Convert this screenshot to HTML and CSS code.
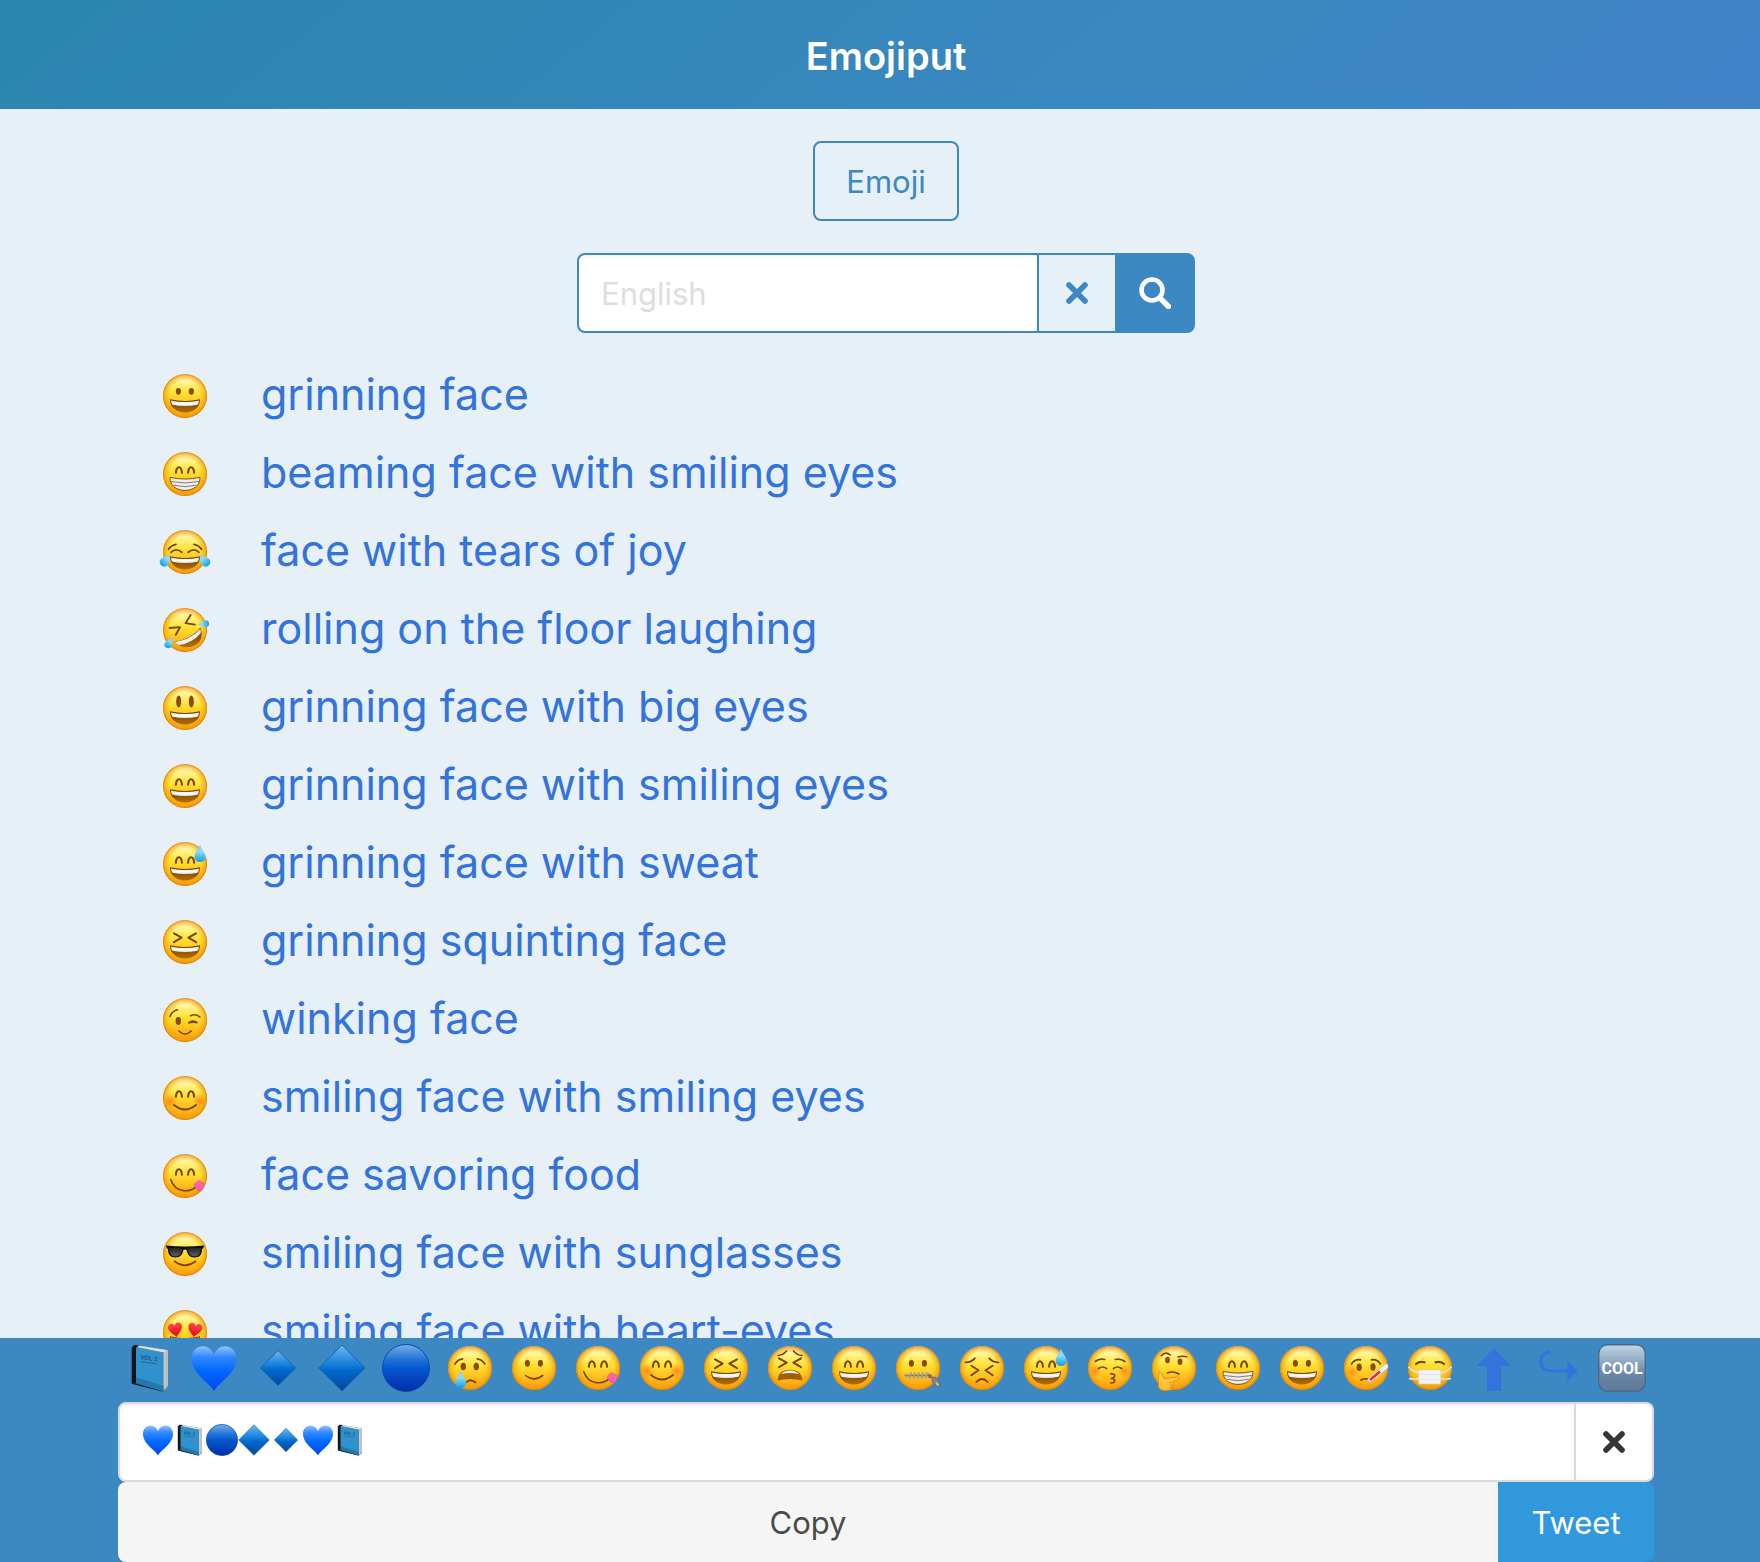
FILE: index.html
```html
<!DOCTYPE html>
<html lang="en">
<head>
  <meta charset="UTF-8">
  <meta name="viewport" content="width=device-width, initial-scale=1">
  <title>Emojiput</title>
  <link rel="stylesheet" href="styles.css">
</head>
<body>
  <!-- emoji sprite -->
  <svg class="sprite" width="0" height="0" aria-hidden="true">
    <defs>
      <linearGradient id="g-face" x1="0" y1="0" x2="0" y2="1">
        <stop offset="0" stop-color="#fffbe6"/>
        <stop offset=".2" stop-color="#fff48a"/>
        <stop offset=".45" stop-color="#ffe02f"/>
        <stop offset=".75" stop-color="#ffb91c"/>
        <stop offset="1" stop-color="#f59a10"/>
      </linearGradient>
      <radialGradient id="g-rim">
        <stop offset=".7" stop-color="#fba505" stop-opacity="0"/>
        <stop offset=".92" stop-color="#f99c05" stop-opacity=".65"/>
        <stop offset="1" stop-color="#d07808" stop-opacity=".95"/>
      </radialGradient>
      <radialGradient id="g-blush">
        <stop offset="0" stop-color="#ff6a1a" stop-opacity=".7"/>
        <stop offset="1" stop-color="#ff7a1a" stop-opacity="0"/>
      </radialGradient>
      <linearGradient id="g-drop" x1="0" y1="0" x2="0" y2="1">
        <stop offset="0" stop-color="#7fd0f0"/>
        <stop offset=".4" stop-color="#8adcfa"/>
        <stop offset="1" stop-color="#0c9be6"/>
      </linearGradient>
      <linearGradient id="g-teeth" x1="0" y1="0" x2="0" y2="1">
        <stop offset="0" stop-color="#c9ccd2"/>
        <stop offset=".5" stop-color="#ffffff"/>
        <stop offset="1" stop-color="#dfe1e6"/>
      </linearGradient>
      <linearGradient id="g-mouth" x1="0" y1="0" x2="0" y2="1">
        <stop offset="0" stop-color="#6e3a00"/>
        <stop offset="1" stop-color="#b06f05"/>
      </linearGradient>
      <linearGradient id="g-heart" x1="0" y1="0" x2="0" y2="1">
        <stop offset="0" stop-color="#8fc3ff"/>
        <stop offset=".25" stop-color="#2f86ff"/>
        <stop offset=".55" stop-color="#0069ff"/>
        <stop offset="1" stop-color="#0047f5"/>
      </linearGradient>
      <linearGradient id="g-diamond" x1="0" y1="0" x2="0" y2="1">
        <stop offset="0" stop-color="#6fb6ec"/>
        <stop offset=".4" stop-color="#1a83dc"/>
        <stop offset=".55" stop-color="#0069cc"/>
        <stop offset="1" stop-color="#0a469e"/>
      </linearGradient>
      <linearGradient id="g-circle" x1="0" y1="0" x2="0" y2="1">
        <stop offset="0" stop-color="#7aaeea"/>
        <stop offset=".3" stop-color="#2676d8"/>
        <stop offset=".5" stop-color="#0459cf"/>
        <stop offset="1" stop-color="#022ca8"/>
      </linearGradient>
      <linearGradient id="g-lens" x1="0" y1="0" x2="0" y2="1">
        <stop offset="0" stop-color="#222"/>
        <stop offset="1" stop-color="#5c5c5c"/>
      </linearGradient>
      <linearGradient id="g-cool" x1="0" y1="0" x2="0" y2="1">
        <stop offset="0" stop-color="#c3d6e4"/>
        <stop offset=".35" stop-color="#8fabc3"/>
        <stop offset=".6" stop-color="#6a89a8"/>
        <stop offset="1" stop-color="#5f7896"/>
      </linearGradient>
      <linearGradient id="g-red" x1="0" y1="0" x2="0" y2="1">
        <stop offset="0" stop-color="#ff4b4b"/>
        <stop offset="1" stop-color="#e00010"/>
      </linearGradient>
      <linearGradient id="g-hand" x1="0" y1="0" x2="0" y2="1">
        <stop offset="0" stop-color="#ffd84a"/>
        <stop offset="1" stop-color="#ffb52a"/>
      </linearGradient>

      <!-- shared parts -->
      <g id="p-face">
        <circle cx="24" cy="24" r="22" fill="url(#g-face)"/>
        <circle cx="24" cy="24" r="22" fill="url(#g-rim)"/>
      </g>
      <g id="p-dots" fill="#8a4b00">
        <ellipse cx="17.4" cy="19.3" rx="2.6" ry="3.4"/>
        <ellipse cx="30.4" cy="19.3" rx="2.6" ry="3.4"/>
      </g>
      <g id="p-arches" fill="none" stroke="#7c4300" stroke-width="2.1" stroke-linecap="round">
        <path d="M14.9 22.8Q15.3 17.2 17.9 17.2T20.9 22.8"/>
        <path d="M27.1 22.8Q27.5 17.2 30.1 17.2T33.1 22.8"/>
      </g>
      <g id="p-squint" fill="none" stroke="#7c4300" stroke-width="2" stroke-linecap="round" stroke-linejoin="round">
        <path d="M13 15.3L20.6 19.7L13 24.2M35 15.3L27.4 19.7L35 24.2"/>
      </g>
      <g id="p-grin">
        <path d="M9 27.3Q24 30.8 39 27.3C39.3 36 32 40.4 24 40.4S8.7 36 9 27.3z" fill="url(#g-mouth)"/>
        <path d="M9.9 28.4Q24 31.4 38.1 28.4Q37.9 31 36.5 32.7Q24 35.4 11.5 32.7Q10.1 31 9.9 28.4z" fill="url(#g-teeth)"/>
      </g>
      <path id="p-drop" d="M0 -9C1 -5 5.5 -.5 5.5 3A5.500 5.500 0 0 1 -5.500 3C-5.500 -.5 -1 -5 0 -9z" fill="url(#g-drop)"/>
      <path id="p-heart" d="M24 47C20 39 1.500 30 1.500 14.500C1.500 7 7 2.200 13 2.200C18 2.200 22 5.500 24 10.500C26 5.500 30 2.200 35 2.200C41 2.200 46.500 7 46.500 14.500C46.500 30 28 39 24 47z"/>
    </defs>

    <symbol id="grinning" viewBox="0 0 48 48"><use href="#p-face"/><use href="#p-dots"/><use href="#p-grin"/></symbol>
    <symbol id="beaming" viewBox="0 0 48 48">
      <use href="#p-face"/><use href="#p-arches"/>
      <path d="M9 27.3Q24 30.8 39 27.3C39.3 36 32 40.4 24 40.4S8.7 36 9 27.3z" fill="#eceef2" stroke="#8a5000" stroke-width="1"/>
      <path d="M10 31.5Q24 34.5 38 31.5M12.500 35.200Q24 38.200 35.500 35.200" fill="none" stroke="#8d7a66" stroke-width="1"/>
    </symbol>
    <symbol id="joy" viewBox="0 0 48 48" overflow="visible">
      <use href="#p-face"/><use href="#p-grin" y="1"/>
      <path d="M10 24.300Q15 19.500 20.800 24.300M27.200 24.300Q33 19.500 38 24.300M7.500 21.300Q10 17.300 15 16.300M40.500 21.300Q38 17.300 33 16.300" fill="none" stroke="#7c4300" stroke-width="1.800" stroke-linecap="round"/>
      <use href="#p-drop" transform="translate(5 32) rotate(40) scale(.85)"/>
      <use href="#p-drop" transform="translate(43 32) rotate(-40) scale(.85)"/>
    </symbol>
    <symbol id="rofl" viewBox="0 0 48 48" overflow="visible">
      <use href="#p-face"/>
      <path d="M8.500 22L19 21.200L14.700 29M29.700 9L24.500 17.200L34 18.700" fill="none" stroke="#7c4300" stroke-width="1.800" stroke-linecap="round" stroke-linejoin="round"/>
      <path d="M12.500 36Q30 33.500 39.500 21.500Q43.500 33 35 38.800Q24 45 12.500 36z" fill="url(#g-mouth)"/>
      <path d="M13.500 36.300Q30 33.500 39.200 23Q40.400 25.500 39.600 27.300Q31 37.500 17.500 39Q15 38 13.500 36.300z" fill="#f2f3f6"/>
      <use href="#p-drop" transform="translate(8.500 36.500) rotate(30) scale(.7)"/>
      <use href="#p-drop" transform="translate(42.500 18) rotate(-95) scale(.65)"/>
    </symbol>
    <symbol id="big-eyes" viewBox="0 0 48 48">
      <use href="#p-face"/><use href="#p-grin"/>
      <ellipse cx="17.700" cy="17.500" rx="2.500" ry="6" fill="#8a4b00"/>
      <ellipse cx="30.300" cy="17.500" rx="2.500" ry="6" fill="#8a4b00"/>
    </symbol>
    <symbol id="smile" viewBox="0 0 48 48"><use href="#p-face"/><use href="#p-arches"/><use href="#p-grin"/></symbol>
    <symbol id="sweat" viewBox="0 0 48 48">
      <use href="#p-face"/><use href="#p-arches"/><use href="#p-grin"/>
      <use href="#p-drop" transform="translate(39 13.500)"/>
    </symbol>
    <symbol id="squinting" viewBox="0 0 48 48"><use href="#p-face"/><use href="#p-squint"/><use href="#p-grin"/></symbol>
    <symbol id="wink" viewBox="0 0 48 48">
      <use href="#p-face"/>
      <ellipse cx="17.300" cy="25" rx="2.700" ry="4" fill="#8a4b00"/>
      <path d="M9 20.500Q11 15 16.500 13.800M29.500 19.700Q34.500 17.200 39 21M27.700 26.800Q32 23.300 36.500 26.800Q32 25.800 27.700 26.800M17.800 35Q24 41 30.200 35" fill="none" stroke="#7c4300" stroke-width="1.600" stroke-linecap="round"/>
    </symbol>
    <symbol id="blush" viewBox="0 0 48 48">
      <use href="#p-face"/>
      <circle cx="9.500" cy="27" r="7.500" fill="url(#g-blush)"/>
      <circle cx="38.500" cy="27" r="7.500" fill="url(#g-blush)"/>
      <use href="#p-arches"/>
      <path d="M13 31Q24 40 35 31" fill="none" stroke="#7c4300" stroke-width="1.800" stroke-linecap="round"/>
    </symbol>
    <symbol id="savoring" viewBox="0 0 48 48">
      <use href="#p-face"/><use href="#p-arches"/>
      <path d="M9.700 27.500C14 41 30 42 37 32.500" fill="none" stroke="#7c4300" stroke-width="1.600" stroke-linecap="round"/>
      <path d="M33 32.500L37.500 28.500Q40 30.500 42.500 31Q44 36.500 40 38.500Q35.500 39.500 33 32.500z" fill="#ff62b0" stroke="#e0408f" stroke-width=".6"/>
    </symbol>
    <symbol id="sunglasses" viewBox="0 0 48 48">
      <use href="#p-face"/>
      <path d="M5 15.500Q24 17.500 43 15.500L42.500 18L41 19C41 24 39 27.500 33.500 27.500C28.500 27.500 26.500 24.500 25.500 20Q24 18.800 22.500 20C21.500 24.500 19.500 27.500 14.500 27.500C9 27.500 7 24 7 19L5.500 18z" fill="#0c0c0c"/>
      <path d="M8.300 18Q15 17.300 21.300 18.600C20.500 23.500 19 26.400 14.500 26.400C9.500 26.400 8.300 22.500 8.300 18zM39.700 18Q33 17.300 26.700 18.600C27.500 23.500 29 26.400 33.500 26.400C38.500 26.400 39.700 22.500 39.700 18z" fill="url(#g-lens)"/>
      <path d="M13.500 31.300Q24 39.300 34.500 31.300" fill="none" stroke="#7c4300" stroke-width="1.700" stroke-linecap="round"/>
    </symbol>
    <symbol id="heart-eyes" viewBox="0 0 48 48">
      <use href="#p-face"/><use href="#p-grin" y="1"/>
      <g fill="url(#g-red)">
        <use href="#p-heart" transform="translate(7 14.500) rotate(-10 7 7) scale(.31)"/>
        <use href="#p-heart" transform="translate(26.500 14.500) rotate(10 7 7) scale(.31)"/>
      </g>
    </symbol>
    <symbol id="book" viewBox="0 0 48 48">
      <path d="M12 1.500L42 6.300V43.500L37.300 47.300L10 40z" fill="#8d8f93"/>
      <path d="M14 1.800L42 6.300L37.500 8.600L10 2.900z" fill="#dfe0e2"/>
      <path d="M37.500 8.600L41.700 6.500V41.800L37.500 46z" fill="#d5d3cf"/>
      <path d="M39 8V44M40.400 7.300V43" stroke="#aaa7a2" stroke-width=".6"/>
      <path d="M9.500 2.900L37.500 8.600V47.400L9.500 40.300z" fill="#3191cd"/>
      <path d="M9.500 33L37.500 42V47.400L9.500 40.300z" fill="#2279b2"/>
      <path d="M5.700 3.200L10 1V39.500L5.700 38.700z" fill="#10151d"/>
      <path d="M5.700 38.700L10 39.500L37.500 47.400H36L5.700 39.700zM7 1.600L13 1.300L11 3.300L8 4z" fill="#10151d"/>
      <text class="book-title" x="14" y="15" transform="rotate(8 14 15)">VOL 3</text>
      <path d="M15 17.500L31 20" stroke="#24608c" stroke-width=".8"/>
    </symbol>
    <symbol id="blue-heart" viewBox="0 0 48 48"><use href="#p-heart" fill="url(#g-heart)"/></symbol>
    <symbol id="small-diamond" viewBox="0 0 48 48"><path d="M24 6.500L41.500 24L24 41.500L6.500 24z" fill="url(#g-diamond)" stroke="#0c5aa8" stroke-width=".8"/></symbol>
    <symbol id="large-diamond" viewBox="0 0 48 48"><path d="M24 1L47 24L24 47L1 24z" fill="url(#g-diamond)" stroke="#0c5aa8" stroke-width=".8"/></symbol>
    <symbol id="blue-circle" viewBox="0 0 48 48"><circle cx="24" cy="24" r="23.500" fill="url(#g-circle)" stroke="#0a4bb0" stroke-width="1"/></symbol>
    <symbol id="cry" viewBox="0 0 48 48">
      <use href="#p-face"/>
      <ellipse cx="17.300" cy="22.500" rx="2.700" ry="3.800" fill="#8a4b00"/>
      <ellipse cx="30.300" cy="22.500" rx="2.700" ry="3.800" fill="#8a4b00"/>
      <path d="M9 20Q11.500 15.500 16.500 14.800M38.800 20Q36.300 15.500 31.300 14.800M20 38.500Q24.500 34 29.500 38.500" fill="none" stroke="#7c4300" stroke-width="1.700" stroke-linecap="round"/>
      <use href="#p-drop" transform="translate(14.700 35.500)"/>
    </symbol>
    <symbol id="slight-smile" viewBox="0 0 48 48">
      <use href="#p-face"/><use href="#p-dots"/>
      <path d="M15.500 31.500Q24 38.300 32.700 31.500" fill="none" stroke="#7c4300" stroke-width="1.600" stroke-linecap="round"/>
    </symbol>
    <symbol id="tired" viewBox="0 0 48 48">
      <use href="#p-face"/><use href="#p-squint" y="-1"/>
      <path d="M12 11.500Q17 11 20.500 6.900M36 11.500Q31 11 27.500 6.900" fill="none" stroke="#7c4300" stroke-width="1.500" stroke-linecap="round"/>
      <path d="M11.500 36.500C12 29 17 25.700 24 25.700S36 29 36.500 36.500Q24 33.500 11.500 36.500z" fill="#a06000"/>
      <path d="M15 30Q18.500 26.500 24 26.500T33 30Q24 27.800 15 30z" fill="#f4f5f8"/>
    </symbol>
    <symbol id="zipper" viewBox="0 0 48 48">
      <use href="#p-face"/><use href="#p-dots"/>
      <path d="M10.500 31.500H35" stroke="#8a6a3a" stroke-width="1.400"/>
      <path d="M13 29.800L12.500 33.500M17 28.500L15.500 34.500M21 28.500L19.500 34.500M25 28.500L23.500 34.500M29 28.500L27.500 34.500M33 28.500L31.500 34.500" stroke="#9a9ca3" stroke-width="2"/>
      <path d="M34 29.500L38 31L37.500 34.500L34.500 34z" fill="#6d6f75"/>
      <path d="M38 33L42 33.500L47 40L43.500 43.500L38.500 38z" fill="#84868c" stroke="#5d5f66" stroke-width=".8"/>
      <path d="M42.500 39.300L44 41" stroke="#d0d2d6" stroke-width="1.600" stroke-linecap="round"/>
    </symbol>
    <symbol id="persevere" viewBox="0 0 48 48">
      <use href="#p-face"/>
      <path d="M13.300 21.700L20.500 26.300L13.300 31.200M34.700 21.700L27.500 26.300L34.700 31.200" fill="none" stroke="#7c4300" stroke-width="1.900" stroke-linecap="round" stroke-linejoin="round"/>
      <path d="M7.500 18.300Q13 18.500 16.700 14.300M40.500 18.300Q35 18.500 31.300 14.300M18.300 38Q24 32 29.700 38" fill="none" stroke="#7c4300" stroke-width="1.800" stroke-linecap="round"/>
    </symbol>
    <symbol id="kissing" viewBox="0 0 48 48">
      <use href="#p-face"/>
      <circle cx="9.500" cy="27" r="7" fill="url(#g-blush)"/>
      <circle cx="38.500" cy="27" r="7" fill="url(#g-blush)"/>
      <path d="M9.300 17.500Q13 14.200 18.700 15.500M38.700 17.500Q35 14.200 29.300 15.500M12.500 24.500Q16.500 21.500 20.500 24.500M27.500 24.500Q31.500 21.500 35.500 24.500" fill="none" stroke="#7c4300" stroke-width="1.700" stroke-linecap="round"/>
      <path d="M24.500 29.700Q29 29.700 28.700 32Q28 34 25.500 34.500Q29 34.800 28.800 37Q28 39.300 24.700 39" fill="none" stroke="#7c4300" stroke-width="1.600" stroke-linecap="round" stroke-linejoin="round"/>
    </symbol>
    <symbol id="thinking" viewBox="0 0 48 48">
      <use href="#p-face"/>
      <ellipse cx="17.500" cy="16" rx="2.400" ry="3.300" fill="#8a4b00"/>
      <ellipse cx="30" cy="17.700" rx="2.400" ry="3.300" fill="#8a4b00"/>
      <path d="M11.300 11.700Q15.500 7 20.300 11M28 13Q32 11.500 36.700 12.800M17.500 29Q23 26.700 29 30" fill="none" stroke="#7c4300" stroke-width="1.600" stroke-linecap="round"/>
      <path d="M9 28Q10.500 27 11.500 29L14.500 35L27.500 33Q30.500 34 28.500 35.500L23.500 37.500Q24.500 39 23.300 40Q24 42 22.500 43Q22.500 46 17 46.500Q10.500 47 8.800 43.500Q7.500 37 9 28z" fill="url(#g-hand)" stroke="#e58a10" stroke-width=".9"/>
      <path d="M19 38.300H23.500M19.500 41H23M19.500 43.500H22" stroke="#d98010" stroke-width=".8"/>
    </symbol>
    <symbol id="thermometer" viewBox="0 0 48 48">
      <use href="#p-face"/>
      <circle cx="10.500" cy="28" r="7" fill="url(#g-blush)"/>
      <ellipse cx="17.200" cy="23.300" rx="2.600" ry="3.700" fill="#8a4b00"/>
      <ellipse cx="31" cy="23" rx="2.600" ry="3.700" fill="#8a4b00"/>
      <path d="M9.500 20Q12.500 15 18.500 15.800M38.500 20Q35.500 15 29.500 15.800M19 36Q23 33.800 28.500 35.500" fill="none" stroke="#7c4300" stroke-width="1.700" stroke-linecap="round"/>
      <path d="M28 36L44 22.500" stroke="#c4c8d0" stroke-width="5" stroke-linecap="round"/>
      <path d="M28 36L44 22.500" stroke="#f3f4f7" stroke-width="3.600" stroke-linecap="round"/>
      <path d="M28 36L38 27.500" stroke="#f02a2a" stroke-width="2.600"/>
    </symbol>
    <symbol id="mask" viewBox="0 0 48 48">
      <use href="#p-face"/>
      <path d="M10 20Q13 16.700 18.500 18.300M38 20Q35 16.700 29.500 18.300" fill="none" stroke="#7c4300" stroke-width="2.200" stroke-linecap="round"/>
      <path d="M2.500 22.700Q8 28.500 13 28.500M3 34.500Q8 35.500 13 34.500M45.500 22.700Q40 28.500 35 28.500M45 34.500Q40 35.500 35 34.500" fill="none" stroke="#e6eaf0" stroke-width="1.600"/>
      <rect x="12.700" y="26" width="22" height="14" rx="1" fill="#f1f3f7" stroke="#cfd3da" stroke-width=".6"/>
      <path d="M13 30.500H34.500M13 35.500H34.500" stroke="#dde1e8" stroke-width=".8"/>
    </symbol>
    <symbol id="arrow-up" viewBox="0 0 48 48"><path d="M24 4.300L41.500 22H31V47H17V22H6.500z" fill="#3273dc"/></symbol>
    <symbol id="arrow-hook" viewBox="0 0 48 48">
      <path d="M16.700 8C10.500 8 6.700 12 6.700 17.300S10.500 26.700 16.700 26.700H34" fill="none" stroke="#3273dc" stroke-width="3"/>
      <path d="M33.500 16.700L43.500 26.700L33.500 36.700z" fill="#3273dc"/>
    </symbol>
    <symbol id="cool" viewBox="0 0 48 48">
      <rect x=".7" y=".7" width="46.600" height="46.600" rx="9" fill="url(#g-cool)" stroke="#4c698a" stroke-width="1.400"/>
      <text class="cool-text" x="24" y="30" text-anchor="middle">COOL</text>
    </symbol>
    <symbol id="times" viewBox="0 0 24 24"><path d="M4 4L20 20M20 4L4 20" fill="none" stroke="currentColor" stroke-width="5.600" stroke-linecap="round"/></symbol>
    <symbol id="search" viewBox="0 0 32 32">
      <circle cx="13" cy="13" r="10.500" fill="none" stroke="currentColor" stroke-width="4.600"/>
      <path d="M21 21L29.500 29.500" stroke="currentColor" stroke-width="5.400" stroke-linecap="round"/>
    </symbol>
  </svg>

  <header class="hero">
    <h1 class="title">Emojiput</h1>
  </header>

  <main class="main">
    <button class="button is-outlined" type="button">Emoji</button>

    <form class="search">
      <input class="search-input" type="text" placeholder="English" aria-label="Search emoji">
      <button class="search-clear" type="reset" aria-label="Clear search"><svg class="icon-times"><use href="#times"/></svg></button>
      <button class="search-submit" type="button" aria-label="Search"><svg class="icon-search"><use href="#search"/></svg></button>
    </form>

    <ul class="emoji-list">
      <li><a href="#"><svg class="emoji"><use href="#grinning"/></svg>grinning face</a></li>
      <li><a href="#"><svg class="emoji"><use href="#beaming"/></svg>beaming face with smiling eyes</a></li>
      <li><a href="#"><svg class="emoji"><use href="#joy"/></svg>face with tears of joy</a></li>
      <li><a href="#"><svg class="emoji"><use href="#rofl"/></svg>rolling on the floor laughing</a></li>
      <li><a href="#"><svg class="emoji"><use href="#big-eyes"/></svg>grinning face with big eyes</a></li>
      <li><a href="#"><svg class="emoji"><use href="#smile"/></svg>grinning face with smiling eyes</a></li>
      <li><a href="#"><svg class="emoji"><use href="#sweat"/></svg>grinning face with sweat</a></li>
      <li><a href="#"><svg class="emoji"><use href="#squinting"/></svg>grinning squinting face</a></li>
      <li><a href="#"><svg class="emoji"><use href="#wink"/></svg>winking face</a></li>
      <li><a href="#"><svg class="emoji"><use href="#blush"/></svg>smiling face with smiling eyes</a></li>
      <li><a href="#"><svg class="emoji"><use href="#savoring"/></svg>face savoring food</a></li>
      <li><a href="#"><svg class="emoji"><use href="#sunglasses"/></svg>smiling face with sunglasses</a></li>
      <li><a href="#"><svg class="emoji"><use href="#heart-eyes"/></svg>smiling face with heart-eyes</a></li>
    </ul>
  </main>

  <footer class="footer">
    <nav class="history" aria-label="Recent emoji">
      <a href="#" aria-label="blue book"><svg class="emoji"><use href="#book"/></svg></a>
      <a href="#" aria-label="blue heart"><svg class="emoji"><use href="#blue-heart"/></svg></a>
      <a href="#" aria-label="small blue diamond"><svg class="emoji"><use href="#small-diamond"/></svg></a>
      <a href="#" aria-label="large blue diamond"><svg class="emoji"><use href="#large-diamond"/></svg></a>
      <a href="#" aria-label="blue circle"><svg class="emoji"><use href="#blue-circle"/></svg></a>
      <a href="#" aria-label="crying face"><svg class="emoji"><use href="#cry"/></svg></a>
      <a href="#" aria-label="slightly smiling face"><svg class="emoji"><use href="#slight-smile"/></svg></a>
      <a href="#" aria-label="face savoring food"><svg class="emoji"><use href="#savoring"/></svg></a>
      <a href="#" aria-label="smiling face with smiling eyes"><svg class="emoji"><use href="#blush"/></svg></a>
      <a href="#" aria-label="grinning squinting face"><svg class="emoji"><use href="#squinting"/></svg></a>
      <a href="#" aria-label="tired face"><svg class="emoji"><use href="#tired"/></svg></a>
      <a href="#" aria-label="grinning face with smiling eyes"><svg class="emoji"><use href="#smile"/></svg></a>
      <a href="#" aria-label="zipper-mouth face"><svg class="emoji"><use href="#zipper"/></svg></a>
      <a href="#" aria-label="persevering face"><svg class="emoji"><use href="#persevere"/></svg></a>
      <a href="#" aria-label="grinning face with sweat"><svg class="emoji"><use href="#sweat"/></svg></a>
      <a href="#" aria-label="kissing face with closed eyes"><svg class="emoji"><use href="#kissing"/></svg></a>
      <a href="#" aria-label="thinking face"><svg class="emoji"><use href="#thinking"/></svg></a>
      <a href="#" aria-label="beaming face with smiling eyes"><svg class="emoji"><use href="#beaming"/></svg></a>
      <a href="#" aria-label="grinning face"><svg class="emoji"><use href="#grinning"/></svg></a>
      <a href="#" aria-label="face with thermometer"><svg class="emoji"><use href="#thermometer"/></svg></a>
      <a href="#" aria-label="face with medical mask"><svg class="emoji"><use href="#mask"/></svg></a>
      <a href="#" aria-label="up arrow"><svg class="emoji"><use href="#arrow-up"/></svg></a>
      <a href="#" aria-label="left arrow curving right"><svg class="emoji"><use href="#arrow-hook"/></svg></a>
      <a href="#" aria-label="COOL button"><svg class="emoji"><use href="#cool"/></svg></a>
    </nav>

    <div class="output">
      <label class="output-field">
        <svg class="emoji-small"><use href="#blue-heart"/></svg>
        <svg class="emoji-small"><use href="#book"/></svg>
        <svg class="emoji-small"><use href="#blue-circle"/></svg>
        <svg class="emoji-small"><use href="#large-diamond"/></svg>
        <svg class="emoji-small"><use href="#small-diamond"/></svg>
        <svg class="emoji-small"><use href="#blue-heart"/></svg>
        <svg class="emoji-small"><use href="#book"/></svg>
        <input class="output-input" type="text" aria-label="Selected emoji">
      </label>
      <button class="output-clear" type="button" aria-label="Clear"><svg class="icon-times"><use href="#times"/></svg></button>
    </div>

    <div class="actions">
      <button class="copy" type="button">Copy</button>
      <button class="tweet" type="button">Tweet</button>
    </div>
  </footer>
</body>
</html>
```
FILE: styles.css
```css
* {
  box-sizing: border-box;
}
body {
  margin: 0;
  height: 100vh;
  display: flex;
  flex-direction: column;
  background: #e7f0f7;
  color: #4a4a4a;
  font-family: Inter, "Liberation Sans", sans-serif;
  font-size: 31px;
}
button,
input {
  font: inherit;
  margin: 0;
}
button {
  cursor: pointer;
}
.sprite {
  position: absolute;
}
.hero {
  flex: none;
  height: 109px;
  padding: 2px 0 0 12px;
  display: flex;
  align-items: center;
  justify-content: center;
  background: linear-gradient(141deg, #2b85ae 0%, #3b88c3 71%, #4182c9 100%);
}
.title {
  margin: 0;
  color: #fff;
  font-size: 38px;
  font-weight: 600;
}
.main {
  flex: 1;
  min-height: 0;
  overflow-y: auto;
  scrollbar-width: none;
  padding: 32px 0 0 12px;
  display: flex;
  flex-direction: column;
  align-items: center;
}
.button {
  flex: none;
  height: 80px;
  padding: 0 31px;
  border-radius: 8px;
}
.is-outlined {
  background: transparent;
  border: 2px solid #3b88c3;
  color: #3b88c3;
}
.search {
  flex: none;
  display: flex;
  width: 618px;
  height: 80px;
  margin-top: 32px;
}
.search-input {
  flex: 1;
  min-width: 0;
  padding: 0 22px;
  background: #fff;
  border: 2px solid #3b88c3;
  border-radius: 8px 0 0 8px;
  box-shadow: inset 0 2px 4px rgba(10, 10, 10, 0.05);
  color: #363636;
}
.search-input::placeholder {
  color: #dedede;
}
.search-clear,
.search-submit {
  width: 80px;
  display: flex;
  align-items: center;
  justify-content: center;
  padding: 0;
  border: 2px solid #3b88c3;
}
.search-clear {
  border-left: 0;
  border-right: 0;
  width: 76px;
  background: transparent;
  color: #3b88c3;
}
.search-submit {
  background: #3b88c3;
  color: #fff;
  border-radius: 0 8px 8px 0;
}
.icon-times {
  width: 24px;
  height: 24px;
}
.icon-search {
  width: 32px;
  height: 32px;
}
.emoji-list {
  list-style: none;
  width: 100%;
  max-width: 1536px;
  margin: 22px 0 0;
  padding: 0 43px;
}
.emoji-list a {
  display: flex;
  align-items: center;
  gap: 52px;
  height: 78px;
  color: #3273dc;
  font-size: 43px;
  text-decoration: none;
}
.emoji {
  flex: none;
  width: 48px;
  height: 48px;
  overflow: visible;
}
.emoji-list .emoji {
  margin-top: 4px;
}
.footer {
  flex: none;
  position: relative;
  padding-left: 12px;
  background: #3b88c3;
}
.history,
.output,
.actions {
  display: flex;
  max-width: 1536px;
  margin: 0 auto;
}
.history {
  height: 64px;
  overflow: hidden;
}
.history a {
  flex: 1;
  display: flex;
  justify-content: center;
  padding-top: 6px;
}
.output,
.actions {
  height: 80px;
}
.output-field {
  flex: 1;
  display: flex;
  align-items: center;
  padding: 0 22px;
  background: #fff;
  border: 2px solid #dbdbdb;
  border-radius: 8px 0 0 8px;
  box-shadow: inset 0 2px 4px rgba(10, 10, 10, 0.05);
}
.emoji-small {
  flex: none;
  width: 32px;
  height: 32px;
  margin-bottom: 4px;
}
.output-input {
  flex: 1;
  min-width: 0;
  height: 100%;
  padding: 0;
  border: 0;
  outline: 0;
  background: transparent;
}
.output-clear {
  width: 78px;
  display: flex;
  align-items: center;
  justify-content: center;
  padding: 0;
  background: #fff;
  border: 2px solid #dbdbdb;
  border-left: 0;
  border-radius: 0 8px 8px 0;
  color: #363636;
}
.copy {
  flex: 1;
  background: #f5f5f5;
  border: 0;
  border-radius: 8px 0 0 8px;
  color: #4a4a4a;
}
.tweet {
  width: 156px;
  padding: 0;
  background: #3298dc;
  border: 0;
  border-radius: 0 8px 8px 0;
  color: #fff;
}
.cool-text {
  fill: #fff;
  font-family: Roboto, sans-serif;
  font-size: 16px;
  font-weight: 700;
}
.book-title {
  fill: #1f5276;
  font-size: 6px;
  font-weight: 600;
}
```
